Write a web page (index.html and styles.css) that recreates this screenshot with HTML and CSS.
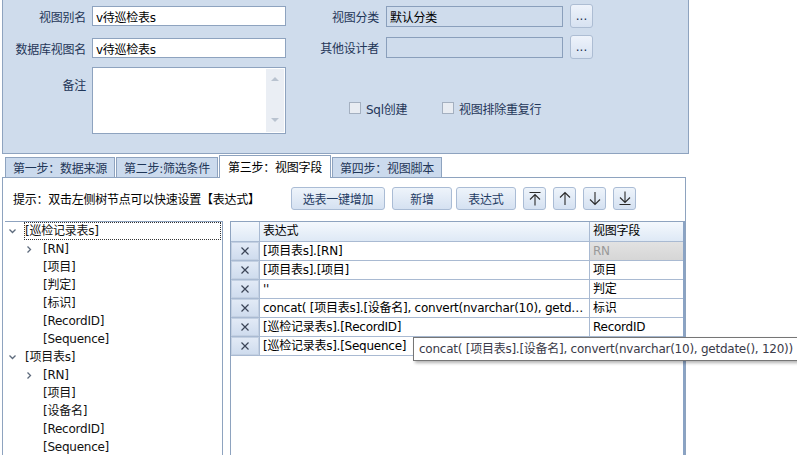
FILE: index.html
```html
<!DOCTYPE html>
<html lang="zh-CN">
<head>
    <meta charset="UTF-8">
    <title>视图设计 - 视图字段</title>
    <link rel="stylesheet" href="styles.css">
</head>
<body>
    <section class="view-info">
        <div class="info-left">
            <div class="form-row">
                <label class="form-label">视图别名</label>
                <input class="text-input" type="text" value="v待巡检表s">
            </div>
            <div class="form-row">
                <label class="form-label">数据库视图名</label>
                <input class="text-input" type="text" value="v待巡检表s">
            </div>
            <div class="form-row memo-row">
                <label class="form-label">备注</label>
                <div class="memo">
                    <div class="memo-scroll">
                        <span class="arrow-up"></span>
                        <span class="arrow-down"></span>
                    </div>
                </div>
            </div>
        </div>

        <div class="info-right">
            <div class="form-row">
                <label class="form-label">视图分类</label>
                <input class="text-input readonly" type="text" value="默认分类" readonly>
                <button class="dots-btn" type="button">...</button>
            </div>
            <div class="form-row">
                <label class="form-label">其他设计者</label>
                <input class="text-input readonly" type="text" value="" readonly>
                <button class="dots-btn" type="button">...</button>
            </div>
            <div class="check-row">
                <label class="check-item first"><span class="check-box"></span>Sql创建</label>
                <label class="check-item"><span class="check-box"></span>视图排除重复行</label>
            </div>
        </div>
    </section>

    <nav class="step-tabs">
        <div class="step-tab">第一步：数据来源</div>
        <div class="step-tab">第二步:筛选条件</div>
        <div class="step-tab active">第三步：视图字段</div>
        <div class="step-tab">第四步：视图脚本</div>
    </nav>

    <section class="step-panel">
        <div class="toolbar">
            <span class="hint">提示：双击左侧树节点可以快速设置【表达式】</span>
            <button class="btn btn-wide" type="button">选表一键增加</button>
            <button class="btn btn-add" type="button">新增</button>
            <button class="btn btn-expr" type="button">表达式</button>
            <button class="btn btn-icon" type="button" title="置顶">
                <svg width="12" height="15" viewBox="0 0 12 15"><path d="M0.5 1.5H11.5M6 3.5V14.5M1 8.5L6 3.5L11 8.5"/></svg>
            </button>
            <button class="btn btn-icon" type="button" title="上移">
                <svg width="12" height="15" viewBox="0 0 12 15"><path d="M6 1.5V14M1 6.5L6 1.5L11 6.5"/></svg>
            </button>
            <button class="btn btn-icon" type="button" title="下移">
                <svg width="12" height="15" viewBox="0 0 12 15"><path d="M6 1V13.5M1 8.5L6 13.5L11 8.5"/></svg>
            </button>
            <button class="btn btn-icon" type="button" title="置底">
                <svg width="12" height="15" viewBox="0 0 12 15"><path d="M6 0.5V11.5M1 6.5L6 11.5L11 6.5M0.5 13.5H11.5"/></svg>
            </button>
        </div>

        <div class="split">
            <ul class="field-tree">
                <li class="tree-node">
                    <div class="tree-row">
                        <span class="expander"><svg width="7" height="5" viewBox="0 0 7 5"><path d="M0.5 0.5L3.5 3.5L6.5 0.5"/></svg></span>
                        <span class="node-text focused">[巡检记录表s]</span>
                    </div>
                    <ul class="tree-children">
                        <li class="tree-row">
                            <span class="expander"><svg width="5" height="7" viewBox="0 0 5 7"><path d="M0.5 0.5L3.5 3.5L0.5 6.5"/></svg></span>
                            <span class="node-text">[RN]</span>
                        </li>
                        <li class="tree-row"><span class="expander"></span><span class="node-text">[项目]</span></li>
                        <li class="tree-row"><span class="expander"></span><span class="node-text">[判定]</span></li>
                        <li class="tree-row"><span class="expander"></span><span class="node-text">[标识]</span></li>
                        <li class="tree-row"><span class="expander"></span><span class="node-text">[RecordID]</span></li>
                        <li class="tree-row"><span class="expander"></span><span class="node-text">[Sequence]</span></li>
                    </ul>
                </li>
                <li class="tree-node">
                    <div class="tree-row">
                        <span class="expander"><svg width="7" height="5" viewBox="0 0 7 5"><path d="M0.5 0.5L3.5 3.5L6.5 0.5"/></svg></span>
                        <span class="node-text">[项目表s]</span>
                    </div>
                    <ul class="tree-children">
                        <li class="tree-row">
                            <span class="expander"><svg width="5" height="7" viewBox="0 0 5 7"><path d="M0.5 0.5L3.5 3.5L0.5 6.5"/></svg></span>
                            <span class="node-text">[RN]</span>
                        </li>
                        <li class="tree-row"><span class="expander"></span><span class="node-text">[项目]</span></li>
                        <li class="tree-row"><span class="expander"></span><span class="node-text">[设备名]</span></li>
                        <li class="tree-row"><span class="expander"></span><span class="node-text">[RecordID]</span></li>
                        <li class="tree-row"><span class="expander"></span><span class="node-text">[Sequence]</span></li>
                    </ul>
                </li>
            </ul>

            <div class="field-grid">
                <div class="grid-row grid-head">
                    <div class="cell"></div>
                    <div class="cell">表达式</div>
                    <div class="cell">视图字段</div>
                </div>
                <div class="grid-row">
                    <div class="cell row-head"><span class="del-btn"><svg width="8" height="8" viewBox="0 0 8 8"><path d="M0.5 0.5L7.5 7.5M7.5 0.5L0.5 7.5"/></svg></span></div>
                    <div class="cell">[项目表s].[RN]</div>
                    <div class="cell locked">RN</div>
                </div>
                <div class="grid-row">
                    <div class="cell row-head"><span class="del-btn"><svg width="8" height="8" viewBox="0 0 8 8"><path d="M0.5 0.5L7.5 7.5M7.5 0.5L0.5 7.5"/></svg></span></div>
                    <div class="cell">[项目表s].[项目]</div>
                    <div class="cell">项目</div>
                </div>
                <div class="grid-row">
                    <div class="cell row-head"><span class="del-btn"><svg width="8" height="8" viewBox="0 0 8 8"><path d="M0.5 0.5L7.5 7.5M7.5 0.5L0.5 7.5"/></svg></span></div>
                    <div class="cell">''</div>
                    <div class="cell">判定</div>
                </div>
                <div class="grid-row">
                    <div class="cell row-head"><span class="del-btn"><svg width="8" height="8" viewBox="0 0 8 8"><path d="M0.5 0.5L7.5 7.5M7.5 0.5L0.5 7.5"/></svg></span></div>
                    <div class="cell">concat( [项目表s].[设备名], convert(nvarchar(10), getdate(), 120))</div>
                    <div class="cell">标识</div>
                </div>
                <div class="grid-row">
                    <div class="cell row-head"><span class="del-btn"><svg width="8" height="8" viewBox="0 0 8 8"><path d="M0.5 0.5L7.5 7.5M7.5 0.5L0.5 7.5"/></svg></span></div>
                    <div class="cell">[巡检记录表s].[RecordID]</div>
                    <div class="cell">RecordID</div>
                </div>
                <div class="grid-row">
                    <div class="cell row-head"><span class="del-btn"><svg width="8" height="8" viewBox="0 0 8 8"><path d="M0.5 0.5L7.5 7.5M7.5 0.5L0.5 7.5"/></svg></span></div>
                    <div class="cell">[巡检记录表s].[Sequence]</div>
                    <div class="cell">Sequence</div>
                </div>
            </div>
        </div>
    </section>

    <!-- hover tooltip for the truncated expression -->
    <div class="tooltip">concat( [项目表s].[设备名], convert(nvarchar(10), getdate(), 120))</div>
</body>
</html>
```

FILE: styles.css
```css
/* Basic Reset */
* {
    margin: 0;
    padding: 0;
    box-sizing: border-box;
}

body {
    font-family: "DejaVu Sans", "Noto Sans CJK SC", sans-serif;
    font-size: 12px;
    letter-spacing: -0.25px;
    color: #000;
    background: #fff;
    width: 797px;
    height: 455px;
    overflow: hidden;
    position: relative;
}

ul {
    list-style: none;
}

/* Top info panel */
.view-info {
    display: flex;
    width: 687px;
    height: 154px;
    margin-left: 2px;
    background: #cfdcec;
    border: 1px solid #8ea3bf;
    border-top: none;
}

.info-left {
    width: 297px;
    padding-top: 6px;
}

.form-row {
    display: flex;
    align-items: center;
}

.form-row + .form-row {
    margin-top: 12px;
}

.form-label {
    width: 89px;
    padding-right: 6px;
    text-align: right;
    color: #1f3658;
    white-space: nowrap;
}

.text-input {
    width: 194px;
    height: 20px;
    padding: 0 3px;
    border: 1px solid #8ea3bf;
    background: #fff;
    font: inherit;
    letter-spacing: inherit;
    color: #000;
    outline: none;
}

.memo-row {
    align-items: flex-start;
}

.info-left .memo-row {
    margin-top: 9px;
}

.memo-row .form-label {
    padding-top: 9px;
}

.memo {
    width: 194px;
    height: 67px;
    border: 1px solid #8ea3bf;
    background: #fff;
    display: flex;
    justify-content: flex-end;
}

.memo-scroll {
    width: 18px;
    margin: 1px;
    background: #eaeef4;
    display: flex;
    flex-direction: column;
    justify-content: space-between;
    align-items: center;
    padding: 8px 0 10px;
}

.arrow-up, .arrow-down {
    width: 0;
    height: 0;
    border-left: 4px solid transparent;
    border-right: 4px solid transparent;
}

.arrow-up {
    border-bottom: 4px solid #b9c3d0;
}

.arrow-down {
    border-top: 4px solid #b9c3d0;
}

.info-right {
    padding-top: 4px;
}

.info-right .form-row {
    height: 24px;
}

.info-right .form-row + .form-row {
    margin-top: 7px;
}

.info-right .form-label {
    width: 86px;
    padding-right: 7px;
}

.text-input.readonly {
    width: 177px;
    height: 21px;
    background: transparent;
    border-color: #8a9fbb;
}

.dots-btn {
    width: 23px;
    height: 24px;
    margin-left: 7px;
    border: 1px solid #adbdd3;
    border-radius: 3px;
    background: linear-gradient(#eef3fb, #d7e2f1);
    font: inherit;
    color: #1c2f4f;
    line-height: 20px;
}

.check-row {
    display: flex;
    align-items: center;
    height: 12px;
    margin-top: 43px;
    padding-left: 49px;
}

.check-item {
    display: flex;
    align-items: center;
    gap: 5px;
    color: #1f3658;
    white-space: nowrap;
}

.check-item.first {
    width: 93px;
}

.check-box {
    width: 12px;
    height: 12px;
    flex-shrink: 0;
    border: 1px solid #a4b0c0;
    background: #e8ecf2;
}

/* Step tabs */
.step-tabs {
    display: flex;
    align-items: flex-end;
    height: 23px;
    padding-left: 5px;
    gap: 1px;
}

.step-tab {
    height: 20px;
    padding: 0 7px;
    display: flex;
    align-items: center;
    background: #cbdaed;
    border: 1px solid #8ea3bf;
    border-bottom: none;
    color: #1f3658;
    white-space: nowrap;
}

.step-tab.active {
    height: 23px;
    margin-bottom: -1px;
    padding: 0 8px 2px;
    background: #fff;
    color: #000;
    position: relative;
    z-index: 1;
}

.step-panel {
    width: 684px;
    height: 280px;
    margin-left: 2px;
    border: 1px solid #8ea3bf;
    padding-top: 9px;
}

/* Toolbar */
.toolbar {
    display: flex;
    align-items: center;
    height: 23px;
    padding-left: 10px;
}

.hint {
    width: 278px;
    white-space: nowrap;
}

.btn {
    width: 60px;
    height: 23px;
    display: flex;
    align-items: center;
    justify-content: center;
    border: 1px solid #aabcd5;
    border-radius: 3px;
    background: linear-gradient(#eef4fb, #d5e1f1);
    font: inherit;
    letter-spacing: inherit;
    color: #1f3b63;
    margin-left: 7px;
}

.btn-wide {
    width: 94px;
    margin-left: 0;
}

.btn-expr {
    margin-left: 4px;
}

.btn-icon {
    width: 23px;
}

.btn-icon svg {
    fill: none;
    stroke: #2a2a2a;
    stroke-width: 1.1;
}

/* Tree + grid */
.split {
    display: flex;
    margin-top: 11px;
    height: 240px;
}

.field-tree {
    width: 218px;
    margin-left: 2px;
    border-top: 1px solid #8ea3bf;
    border-right: 1px solid #8ea3bf;
}

.tree-row {
    display: flex;
    align-items: center;
    height: 18px;
}

.tree-children .tree-row {
    padding-left: 18px;
}

.expander {
    width: 19px;
    height: 18px;
    padding-left: 4px;
    display: flex;
    align-items: center;
    flex-shrink: 0;
}

.expander svg {
    fill: none;
    stroke: #5d6a7c;
    stroke-width: 1.3;
}

.node-text {
    line-height: 16px;
    color: #111;
    white-space: nowrap;
    border: 1px dotted transparent;
}

.node-text.focused {
    flex: 1;
    border-color: #333;
    margin-right: 1px;
}

.field-grid {
    flex: 1;
    margin-left: 7px;
    border-top: 1px solid #8ea3bf;
    border-left: 1px solid #8ea3bf;
    border-right: 2px solid #8aa3c4;
}

.grid-row {
    display: grid;
    grid-template-columns: 29px 330px 1fr;
    height: 19px;
}

.grid-row.grid-head {
    height: 20px;
    background: linear-gradient(#f4f8fd, #dde8f5);
}

.cell {
    padding-left: 3px;
    border-right: 1px solid #a9bad2;
    border-bottom: 1px solid #a9bad2;
    line-height: 18px;
    white-space: nowrap;
    overflow: hidden;
    text-overflow: ellipsis;
}

.grid-head .cell {
    line-height: 19px;
}

.cell:last-child {
    border-right: none;
}

.cell.row-head {
    padding: 0;
}

.del-btn {
    display: flex;
    align-items: center;
    justify-content: center;
    height: 18px;
    background: linear-gradient(#e2eaf6, #cfdcee);
    border: 1px solid #c3d0e2;
}

.del-btn svg {
    stroke: #3b4457;
    stroke-width: 1.2;
}

.cell.locked {
    background: linear-gradient(#e2e2e2, #d6d6d6);
    color: #999;
}

/* Tooltip */
.tooltip {
    position: absolute;
    left: 413px;
    top: 337px;
    width: 400px;
    height: 24px;
    padding-left: 5px;
    line-height: 22px;
    background: #fff;
    border: 1px solid #767676;
    box-shadow: 2px 2px 3px rgba(0, 0, 0, 0.3);
    color: #3a3a48;
    white-space: nowrap;
    z-index: 10;
}
```
